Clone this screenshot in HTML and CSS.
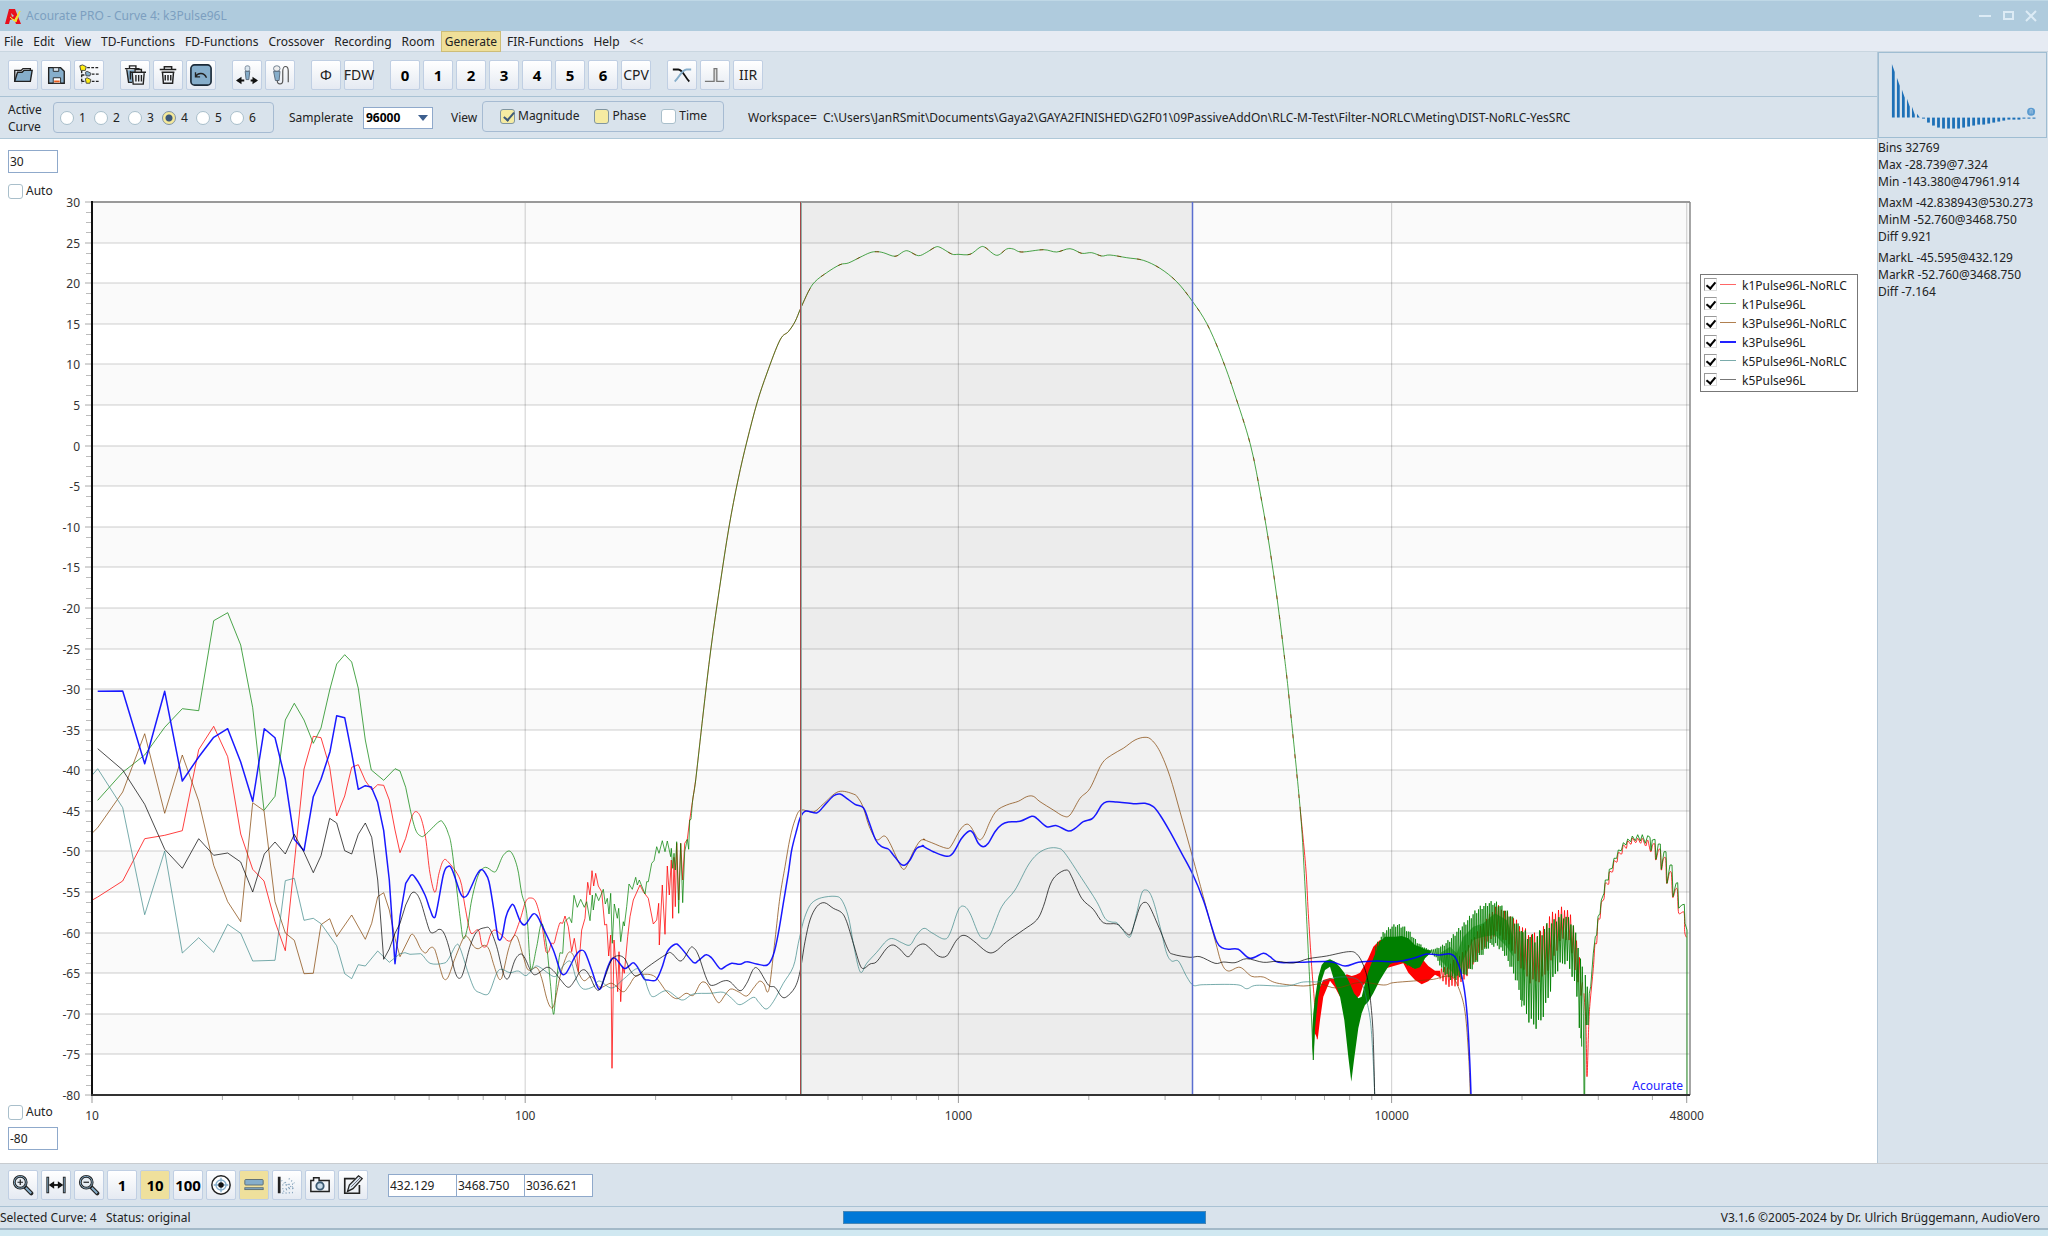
FILE: index.html
```html
<!DOCTYPE html>
<html lang="en">
<head>
<meta charset="utf-8">
<title>Acourate PRO - Curve 4: k3Pulse96L</title>
<link rel="stylesheet" href="styles.css">
</head>
<body>
<header class="titlebar">
  <svg class="app-icon" viewBox="0 0 17 17"><path d="M4 1h6l6 15h-5l-2-5-4 1-1 4H0z" fill="#e8101c"/><path d="M5 9l4 4 6-10-4 11z" fill="#f4e430" stroke="#f4e430"/><path d="M6 5l1 4 2-1z" fill="#afcbdd"/></svg>
  <h1 class="title">Acourate PRO - Curve 4: k3Pulse96L</h1>
  <div class="window-buttons">
    <button aria-label="Minimize"><svg viewBox="0 0 12 12"><path d="M0 6h12"/></svg></button>
    <button aria-label="Maximize"><svg viewBox="0 0 12 12"><rect x="2" y="2" width="9" height="7"/></svg></button>
    <button aria-label="Close"><svg viewBox="0 0 12 12"><path d="M1 1l10 10M11 1L1 11"/></svg></button>
  </div>
</header>
<nav class="menu">
  <a href="#file">File</a><a href="#edit">Edit</a><a href="#view">View</a><a href="#td">TD-Functions</a><a href="#fd">FD-Functions</a><a href="#crossover">Crossover</a><a href="#recording">Recording</a><a href="#room">Room</a><a class="active" href="#generate">Generate</a><a href="#fir">FIR-Functions</a><a href="#help">Help</a><a href="#less">&lt;&lt;</a>
</nav>

<div class="workarea">
  <div class="content">
    <div class="toolbar">
      <div class="group">
        <button class="tool" aria-label="Open"><svg viewBox="0 0 24 24"><path d="M3 19V7h7l2-2h8v3" fill="#e9eef5" stroke="#222" stroke-width="1.5"/><path d="M3 19L6 9h5l2-2h9l-2 12z" fill="#86aecb" stroke="#222" stroke-width="1.5"/></svg></button>
        <button class="tool" aria-label="Save"><svg viewBox="0 0 24 24"><path d="M4 4h13l4 4v13H4z" fill="#86aecb" stroke="#222" stroke-width="1.5"/><path d="M9 4h6v4H9z" fill="#dbe6ef" stroke="#222"/><path d="M9 15h8v6H9z" fill="#fff" stroke="#222"/><path d="M10 18h6v2h-6z" fill="#e85a1c"/></svg></button>
        <button class="tool" aria-label="Workspace tree"><svg viewBox="0 0 24 24"><path d="M4 7v14M4 12h5M4 19h5M10 4h12M15 11h8M15 19h8" stroke="#222" stroke-width="1.5" stroke-dasharray="3 1.5" fill="none"/><path d="M2 2l3-1 4 2-1 4H3z" fill="#ffee10" stroke="#444"/><path d="M8 9l2-1 4 2-1 3H9z" fill="#86aecb" stroke="#444"/><path d="M8 16l2-1 4 2-1 4H9z" fill="#ffee10" stroke="#444"/></svg></button>
      </div>
      <div class="group">
        <button class="tool" aria-label="Delete all"><svg viewBox="0 0 24 24"><path d="M3 7l2 13h6V6z" fill="#86aecb"/><path d="M1 5h16M6 5V2h7v3M3 6l2 14h4M7 8v9" fill="none" stroke="#222" stroke-width="1.5"/><path d="M9 10h13l-1 12H10z" fill="#eef2f7"/><path d="M7 9h17M12 9V6h7v3M9 10l1 12h11l1-12M13 12v7M16 12v7M19 12v7" fill="none" stroke="#222" stroke-width="1.5"/></svg></button>
        <button class="tool" aria-label="Delete"><svg viewBox="0 0 24 24"><path d="M3 6h18M8 6V3h8v3M5 9h14M6 9l1 12h10l1-12M9 12v6M12 12v6M15 12v6" fill="none" stroke="#222" stroke-width="1.6"/></svg></button>
        <button class="tool" aria-label="Undo"><svg viewBox="0 0 24 24"><rect x="1" y="1" width="22" height="22" rx="4" fill="#86aecb" stroke="#1b2a38" stroke-width="1.8"/><path d="M6 9v5h5M6 14c2-4 9-6 12 1" fill="none" stroke="#222" stroke-width="1.5"/></svg></button>
      </div>
      <div class="group">
        <button class="tool" aria-label="Move microphone"><svg viewBox="0 0 24 24"><rect x="10" y="2" width="5" height="6" rx="2" fill="#dbe6ef" stroke="#789"/><path d="M10 8h5l-1 9h-3z" fill="#86aecb" stroke="#567"/><path d="M2 18h7M16 18h6" stroke="#111" stroke-width="2"/><path d="M0 18l6-4v8zM24 18l-6-4v8z" fill="#111"/></svg></button>
        <button class="tool" aria-label="Microphone"><svg viewBox="0 0 24 24"><rect x="5" y="2" width="7" height="6" rx="3" fill="#eee" stroke="#678"/><path d="M5 8h7l-1 10H7z" fill="#86aecb" stroke="#567"/><path d="M9 18c0 5 6 5 6 0V8c0-7 6-7 6 0v12" fill="none" stroke="#555" stroke-width="1.3"/></svg></button>
      </div>
      <div class="group">
        <button class="tool">Φ</button>
        <button class="tool">FDW</button>
      </div>
      <div class="group">
        <button class="tool num">0</button><button class="tool num">1</button><button class="tool num">2</button><button class="tool num">3</button><button class="tool num">4</button><button class="tool num">5</button><button class="tool num">6</button>
        <button class="tool">CPV</button>
      </div>
      <div class="group">
        <button class="tool" aria-label="Crossover"><svg viewBox="0 0 24 24"><path d="M2 6h6c5 0 8 10 12 13" fill="none" stroke="#111" stroke-width="2"/><path d="M22 6h-5C12 6 8 16 4 19" fill="none" stroke="#86aecb" stroke-width="2"/></svg></button>
        <button class="tool" aria-label="Pulse"><svg viewBox="0 0 24 24"><path d="M1 19h10V5h3v14h8" fill="#ddd" stroke="#777" stroke-width="1.4"/></svg></button>
        <button class="tool">IIR</button>
      </div>
    </div>

    <div class="options">
      <span class="caption">Active Curve</span>
      <div class="box radios">
        <label><input type="radio" name="curve">1</label><label><input type="radio" name="curve">2</label><label><input type="radio" name="curve">3</label><label><input type="radio" name="curve" checked>4</label><label><input type="radio" name="curve">5</label><label><input type="radio" name="curve">6</label>
      </div>
      <label class="rate">Samplerate <select><option>96000</option></select></label>
      <span class="view-caption">View</span>
      <div class="box views">
        <label><input class="tick warm" type="checkbox" checked>Magnitude</label>
        <label><input class="tick warm" type="checkbox">Phase</label>
        <label><input class="tick" type="checkbox">Time</label>
      </div>
      <span class="path">Workspace=&nbsp; C:\Users\JanRSmit\Documents\Gaya2\GAYA2FINISHED\G2F01\09PassiveAddOn\RLC-M-Test\Filter-NORLC\Meting\DIST-NoRLC-YesSRC</span>
    </div>

    <main class="chart-area">
      <div class="limits">
        <div class="limit">
          <input class="field" aria-label="Upper limit" value="30">
          <label><input class="tick" type="checkbox">Auto</label>
        </div>
        <div class="limit lower">
          <label><input class="tick" type="checkbox">Auto</label>
          <input class="field" aria-label="Lower limit" value="-80">
        </div>
      </div>
      <svg class="chart" id="chart" viewBox="60 139 1640 1023" role="img" aria-label="Magnitude in dB over frequency"></svg>
      <div class="legend-column">
        <div class="legend">
          <label><input type="checkbox" checked><i class="key red"></i>k1Pulse96L-NoRLC</label>
          <label><input type="checkbox" checked><i class="key green"></i>k1Pulse96L</label>
          <label><input type="checkbox" checked><i class="key brown"></i>k3Pulse96L-NoRLC</label>
          <label><input type="checkbox" checked><i class="key blue"></i>k3Pulse96L</label>
          <label><input type="checkbox" checked><i class="key teal"></i>k5Pulse96L-NoRLC</label>
          <label><input type="checkbox" checked><i class="key black"></i>k5Pulse96L</label>
        </div>
      </div>
    </main>
  </div>

  <aside class="side">
    <div class="logo"><svg id="logo" viewBox="0 0 168 84" aria-hidden="true"></svg></div>
    <div class="stats"><p>Bins 32769</p><p>Max -28.739@7.324</p><p>Min -143.380@47961.914</p></div>
    <div class="stats"><p>MaxM -42.838943@530.273</p><p>MinM -52.760@3468.750</p><p>Diff 9.921</p></div>
    <div class="stats"><p>MarkL -45.595@432.129</p><p>MarkR -52.760@3468.750</p><p>Diff -7.164</p></div>
  </aside>
</div>

<div class="toolbar bottom">
  <div class="group">
    <button class="tool" aria-label="Zoom in"><svg viewBox="0 0 24 24"><path d="M14 14l7 7" stroke="#222" stroke-width="4.5" stroke-linecap="round"/><path d="M15 15l6 6" stroke="#86aecb" stroke-width="2"/><circle cx="9" cy="9" r="6.5" fill="#e6edf4" stroke="#222" stroke-width="3"/><circle cx="9" cy="9" r="6.5" fill="none" stroke="#86aecb"/><path d="M6 9h6M9 6v6" stroke="#222" stroke-width="1.3"/></svg></button>
    <button class="tool" aria-label="Fit width"><svg viewBox="0 0 24 24"><path d="M3 3v18M21 3v18" stroke="#222" stroke-width="3"/><path d="M3 4v16M21 4v16" stroke="#86aecb"/><path d="M7 12h10" stroke="#111" stroke-width="2"/><path d="M4 12l6-4v8zM20 12l-6-4v8z" fill="#111"/></svg></button>
    <button class="tool" aria-label="Zoom out"><svg viewBox="0 0 24 24"><path d="M14 14l7 7" stroke="#222" stroke-width="4.5" stroke-linecap="round"/><path d="M15 15l6 6" stroke="#86aecb" stroke-width="2"/><circle cx="9" cy="9" r="6.5" fill="#e6edf4" stroke="#222" stroke-width="3"/><circle cx="9" cy="9" r="6.5" fill="none" stroke="#86aecb"/><path d="M6 9h6" stroke="#222" stroke-width="1.3"/></svg></button>
    <button class="tool num">1</button>
    <button class="tool num on">10</button>
    <button class="tool num">100</button>
    <button class="tool" aria-label="Target"><svg viewBox="0 0 24 24"><circle cx="12" cy="12" r="10" fill="#fff" stroke="#222" stroke-width="1.6"/><circle cx="12" cy="12" r="5.5" fill="none" stroke="#86aecb" stroke-width="1.5"/><path d="M12 4v16M4 12h16" stroke="#86aecb" stroke-width="1.5"/><circle cx="12" cy="12" r="3" fill="#111"/></svg></button>
    <button class="tool on" aria-label="Bars"><svg viewBox="0 0 24 24"><rect x="2" y="6" width="20" height="6" rx="1" fill="#86aecb" stroke="#5a6b72"/><rect x="2" y="15" width="20" height="2" fill="#86aecb" stroke="#5a6b72"/></svg></button>
    <button class="tool" aria-label="Scatter"><svg viewBox="0 0 24 24"><path d="M3.500 3v18" stroke="#222" stroke-width="3"/><path d="M6 7l10 10M8 19l12-6M7 12l12-1M7 21l14-1M10 9l9 7M7 16h11M14 5l6 5" stroke="#7f9fb8" stroke-width="1.5" stroke-dasharray="1 2.500"/></svg></button>
    <button class="tool" aria-label="Snapshot"><svg viewBox="0 0 24 24"><path d="M2 7h3V4h6v3h11v12H2z" fill="#f2f5f9" stroke="#222" stroke-width="1.6"/><circle cx="12" cy="13" r="4" fill="#c8dbe9" stroke="#3c5a72" stroke-width="2"/></svg></button>
    <button class="tool" aria-label="Edit"><svg viewBox="0 0 24 24"><path d="M14 5H3v16h16v-9" fill="none" stroke="#222" stroke-width="1.8"/><path d="M6 19l2-7 10-10 4 3-10 11z" fill="#dde7f0" stroke="#222" stroke-width="1.4"/><path d="M10 14L20 4" stroke="#667"/></svg></button>
  </div>
  <div class="fields"><input class="field" aria-label="Left marker" value="432.129"><input class="field" aria-label="Right marker" value="3468.750"><input class="field" aria-label="Marker distance" value="3036.621"></div>
</div>
<footer class="status">
  <span>Selected Curve: 4 &nbsp; Status: original</span>
  <div class="progress" role="progressbar" aria-label="Progress" aria-valuenow="100"></div>
  <span class="version">V3.1.6 ©2005-2024 by Dr. Ulrich Brüggemann, AudioVero</span>
</footer>
<script src="chart.js"></script>
</body>
</html>
```
FILE: styles.css
```css
* { box-sizing: border-box; }
body {
  margin: 0;
  min-height: 100vh;
  display: flex;
  flex-direction: column;
  background: #d0e8f1;
  color: #222;
  font: 12px/16px "Noto Sans", "Open Sans", sans-serif;
}
button, input, select { font: inherit; color: inherit; margin: 0; }
label { display: flex; align-items: center; white-space: nowrap; }
p { margin: 0; }

.titlebar {
  display: flex;
  align-items: center;
  height: 31px;
  padding: 0 11px 0 5px;
  background: #afcbdd;
  border-top: 1px solid #bfd8e6;
}
.app-icon { width: 17px; height: 17px; margin-right: 4px; }
.title { flex: 1; margin: 0; font-size: 12px; font-weight: 400; color: #7c9fc0; }
.window-buttons { display: flex; gap: 11px; }
.window-buttons button { width: 12px; height: 12px; padding: 0; border: 0; background: none; }
.window-buttons svg { display: block; fill: none; stroke: #dcebf5; stroke-width: 2; }

.menu {
  display: flex;
  gap: 2px;
  height: 21px;
  background: #e6ebf3;
  border-bottom: 1px solid #c9d6e0;
}
.menu a { height: 21px; padding: 2px 3px; border: 1px solid transparent; color: #222; text-decoration: none; }
.menu .active { background: #efdf98; border-color: #cdbd78; }

.workarea { display: flex; flex: 1; background: #d9e3ec; }
.content { flex: 1; min-width: 0; display: flex; flex-direction: column; }
.side { width: 171px; border-left: 1px solid #b4c8d8; white-space: nowrap; }
.logo { height: 86px; margin: 0 1px 1px 0; border: 1px solid #9fbdd2; }
.logo svg { display: block; width: 100%; }
.stats { line-height: 17px; margin-bottom: 4px; }

.toolbar {
  display: flex;
  align-items: center;
  gap: 16px;
  height: 45px;
  padding: 1px 8px 0;
  background: #d9e3ec;
  border-bottom: 1px solid #a9c2d4;
}
.bottom { height: 44px; gap: 20px; padding-top: 0; border-top: 1px solid #c8ccd0; }
.group { display: flex; gap: 3px; }
.tool {
  display: flex;
  align-items: center;
  justify-content: center;
  width: 30px;
  height: 30px;
  padding: 0;
  border: 1px solid #c0cfe3;
  border-radius: 2px;
  background: linear-gradient(#fff, #e5eaf2);
  font-size: 14px;
  white-space: nowrap;
}
.tool svg { width: 22px; height: 22px; flex: none; }
.num { font-size: 15px; font-weight: 700; color: #000; }
.on { background: #efe09c; }

.options {
  display: flex;
  align-items: center;
  height: 42px;
  border-bottom: 1px solid #afc8d8;
  padding: 0 8px;
}
.caption { width: 45px; line-height: 17px; }
.box { display: flex; align-items: center; height: 31px; border: 1px solid #a6bbd2; border-radius: 4px; }
.radios { width: 221px; padding-left: 6px; margin-right: 15px; }
.radios label { width: 34px; }
.radios input {
  appearance: none;
  width: 14px;
  height: 14px;
  margin-right: 5px;
  border: 1px solid #a9bfcb;
  border-radius: 50%;
  background: #fff;
}
.radios input:checked { background: radial-gradient(#3d5878 0 3px, #f5e99a 4px); border-color: #8093a3; }
.rate { width: 162px; }
.rate select {
  appearance: none;
  width: 70px;
  height: 22px;
  margin-left: auto;
  margin-right: 18px;
  padding: 0 2px;
  border: 1px solid #8fa9cb;
  border-radius: 0;
  background: #fff url("data:image/svg+xml,%3Csvg xmlns='http://www.w3.org/2000/svg' width='10' height='6'%3E%3Cpath d='M0 0h10L5 6z' fill='%233d5f8e'/%3E%3C/svg%3E") no-repeat right 4px center;
  font-weight: 700;
  color: #000;
}
.view-caption { width: 31px; }
.views { width: 242px; padding-left: 17px; gap: 15px; margin: 0 24px 3px 0; }
.path { white-space: nowrap; }
.tick {
  appearance: none;
  width: 15px;
  height: 15px;
  margin: 0 3px 0 0;
  flex: none;
  border: 1px solid #a9bfcb;
  border-radius: 3px;
  background: #fff;
}
.warm { background: #f5eba2; border-color: #8095a0; }
.tick:checked::after, .legend input:checked::after {
  content: "";
  display: block;
  width: 4px;
  height: 9px;
  margin: 0 0 0 5px;
  border: solid #3d5878;
  border-width: 0 2px 2px 0;
  transform: rotate(40deg);
}

.chart-area { display: flex; flex: 1; align-items: flex-start; background: #fff; }
.limits { align-self: stretch; width: 60px; padding: 11px 0 13px 8px; display: flex; flex-direction: column; justify-content: space-between; }
.limit { display: flex; flex-direction: column; gap: 10px; }
.lower { gap: 7px; }
.field { width: 50px; height: 23px; padding: 0 1px; border: 1px solid #8fa9cb; background: #fff; }
.chart { flex: 1; min-width: 0; overflow: visible; font-size: 12px; }
.legend-column { width: 177px; padding-top: 135px; }
.legend { width: 158px; padding: 1px 3px; border: 1px solid #777; background: #fff; }
.legend label { height: 19px; line-height: 19px; }
.legend input { appearance: none; width: 13px; height: 13px; margin: 0 3px 3px 0; border: 1px solid #999; border-right-color: #ddd; border-bottom-color: #ddd; flex: none; }
.legend input:checked::after { width: 4px; height: 7px; margin: 1px 0 0 3px; border-color: #000; }
.key { width: 16px; height: 1px; margin: 0 6px 2px 0; flex: none; }
.red { background: #f66; }
.green { background: #6a6; }
.brown { background: #b08050; }
.blue { background: #22f; height: 2px; }
.teal { background: #7aabab; }
.black { background: #777; }

.fields { display: flex; }
.fields .field { width: 69px; margin-right: -1px; }

.status {
  display: grid;
  grid-template-columns: 1fr 363px 1fr;
  align-items: center;
  height: 23px;
  margin-bottom: 6px;
  background: #d9e3ec;
  border-bottom: 2px solid #a3b9c8;
}
.progress { height: 13px; background: #0078d7; border: 1px solid #4a87b5; }
.version { padding-right: 8px; text-align: right; }

.axis-label { fill: #333; }
.brand { fill: #22f; }
```
FILE: chart.js
```js
const NS = "http://www.w3.org/2000/svg";
const chart = document.getElementById("chart");

function add(parent, tag, attrs, text) {
  const el = document.createElementNS(NS, tag);
  for (const k in attrs) el.setAttribute(k, attrs[k]);
  if (text) el.textContent = text;
  parent.appendChild(el);
  return el;
}

/* Plot frame in chart units */
const LEFT = 92, RIGHT = 1690, TOP = 202, BOTTOM = 1095, DECADE = 433.2;
const yOf = db => TOP + (30 - db) * (BOTTOM - TOP) / 110;
const xOf = f => LEFT + Math.log10(f / 10) * DECADE;

for (let i = 0; i < 22; i += 2)
  add(chart, "rect", { x: LEFT, y: yOf(30 - i * 5), width: RIGHT - LEFT, height: yOf(25) - TOP, fill: "#fafafa" });
const markL = 801, markR = 1192;
add(chart, "rect", { x: markL, y: TOP, width: markR - markL, height: BOTTOM - TOP, fill: "#000", opacity: 0.055 });

for (let db = 30; db >= -80; db -= 5) {
  const y = Math.round(yOf(db));
  add(chart, "path", { d: `M${LEFT} ${y}H${RIGHT}`, stroke: "#000", "stroke-opacity": 0.13, "stroke-width": 1.3 });
  add(chart, "path", { d: `M85 ${y}h6`, stroke: "#aaa" });
  add(chart, "text", { x: 80, y: y + 5, "text-anchor": "end", class: "axis-label" }, String(db));
  if (db > -80) for (let k = 1; k < 4; k++)
    add(chart, "path", { d: `M86 ${Math.round(yOf(db - k * 1.25))}.5h5`, stroke: "#bbb" });
}
for (const f of [10, 100, 1000, 10000, 48000]) {
  const x = xOf(f);
  add(chart, "path", { d: `M${x} ${TOP}V${BOTTOM}`, stroke: "#000", "stroke-opacity": 0.16, "stroke-width": 1.2 });
  add(chart, "path", { d: `M${x} ${BOTTOM}v8`, stroke: "#999" });
  add(chart, "text", { x, y: 1120, "text-anchor": "middle", class: "axis-label" }, String(f));
}
for (const d of [10, 100, 1000, 10000])
  for (let k = 2; k < 10; k++)
    if (k * d < 48000) add(chart, "path", { d: `M${xOf(k * d)} ${BOTTOM}v5`, stroke: "#aaa" });

add(chart, "path", { d: `M${LEFT} ${TOP}H${RIGHT}`, stroke: "#999", "stroke-width": 2 });
add(chart, "path", { d: `M${RIGHT} ${TOP}V${BOTTOM}`, stroke: "#888", "stroke-width": 1.5 });

/* Point lists are stored in thirds of a unit from a tile origin */
const tile = (ox, oy, text) => text.trim().split(/\s+/).map(p => {
  const [x, y] = p.split(",").map(Number);
  return [ox + x / 3, oy + y / 3];
});
const A = t => tile(80, 580, t), B = t => tile(480, 780, t), C = t => tile(920, 700, t), D = t => tile(1280, 780, t), E = t => tile(780, 190, t);

/* Straight at low frequencies, spline where the bins are dense */
function line(points, smooth) {
  let d = "M" + points[0].map(v => v.toFixed(1)).join(" ");
  for (let i = 1; i < points.length; i++) {
    const p0 = points[Math.max(i - 2, 0)], p1 = points[i - 1], p2 = points[i], p3 = points[Math.min(i + 1, points.length - 1)];
    if (smooth(p1[0])) {
      const limit = (m, a, b) => Math.max(Math.min(a, b) - 2, Math.min(Math.max(a, b) + 2, m));
      const c = [p1[0] + (p2[0] - p0[0]) / 6, limit(p1[1] + (p2[1] - p0[1]) / 6, p1[1], p2[1]), p2[0] - (p3[0] - p1[0]) / 6, limit(p2[1] - (p3[1] - p1[1]) / 6, p1[1], p2[1])];
      d += `C${c.map(v => v.toFixed(1)).join(" ")} ${p2.map(v => v.toFixed(1)).join(" ")}`;
    } else d += `L${p2.map(v => v.toFixed(1)).join(" ")}`;
  }
  return d;
}
function curve(points, color, width, opacity, smooth = x => x > 410, dash = "none") {
  add(chart, "path", { d: line(points, smooth), fill: "none", stroke: color, "stroke-width": width, "stroke-opacity": opacity, "stroke-linejoin": "round", "stroke-dasharray": dash });
}
/* Ripple: rows of x,top,bottom */
function rows(text) {
  return text.trim().split(/\s+/).map(r => { const v = r.split(",").map(Number); return [1280 + v[0] / 3, 780 + v[1] / 3, 780 + v[2] / 3]; });
}
function solid(text, color) {
  const r = rows(text);
  const up = r.map(v => [v[0], v[1]]), down = r.map(v => [v[0], v[2]]).reverse();
  add(chart, "path", { d: "M" + up.concat(down).map(p => p.map(v => v.toFixed(1)).join(" ")).join("L") + "Z", fill: color });
}
function ripple(text, color, step, opacity) {
  const r = rows(text);
  let d = "", n = 0;
  for (let x = r[0][0]; x < r[r.length - 1][0]; x += step, n++) {
    let i = 1;
    while (r[i][0] < x) i++;
    const t = (x - r[i - 1][0]) / (r[i][0] - r[i - 1][0]);
    const at = k => r[i - 1][k] + t * (r[i][k] - r[i - 1][k]);
    const h = (at(2) - at(1)) * 0.08 * (n % 3);
    d += `${d ? "L" : "M"}${x.toFixed(1)} ${(n % 2 ? at(1) + h / 2 : at(2) - h / 2).toFixed(1)}`;
  }
  add(chart, "path", { d, fill: "none", stroke: color, "stroke-width": 1, "stroke-opacity": opacity });
}

const rise = [[695.7, 780], [703, 715], [711, 648], [720, 585], [729, 527], [738, 480], [747, 441], [757, 403], [767, 373]];
const plateau = E("0,450 25,425 45,395 62,355 85,305 105,275 140,248 180,224 205,219 240,202 270,188 290,185 310,188 345,199 370,185 385,183 415,197 440,187 465,172 480,172 515,192 535,193 570,193 600,172 615,172 650,196 680,177 700,177 725,186 790,179 830,186 870,176 905,190 935,188 965,198 990,195 1040,203 1090,211 1140,235 1190,275 1238,335 1280,400 1320,490 1360,600");
const fall = [[1250.5, 445], [1261.5, 500], [1270, 550], [1277.3, 600], [1283.6, 650], [1289.3, 700], [1300, 806.7]];
const noisy = x => (x > 410 && x < 558) || (x > 690 && x < 1308);

const k1nLow = [
  ...A("37,960 53,951 128,903 194,776 254,766 307,752 356,509 401,439 443,530 482,762 518,868 552,903 585,1025 616,1112 643,850 672,567 700,469 723,473 749,562 770,708 794,648 815,562 835,554 856,602 876,630 893,614 911,616 928,660 945,750 960,818 977,775 992,720 1006,695 1022,712 1037,775 1050,880 1065,937 1077,880 1090,842 1104,845 1140,898 1155,980 1173,1060 1195,1050 1206,1096 1220,1097 1232,1062 1245,1050 1265,1065 1285,1083 1300,1072 1320,1020 1337,965 1352,954 1368,967 1385,1030 1398,1115 1406,1115 1414,1090 1422,1090 1430,1060"),
  ...B("240,428 248,430 255,408 265,440 275,515 283,475 290,520 295,575 305,450 315,415 323,307 330,345 336,272 341,318 347,280 355,318 365,335 374,435 380,433 386,528 392,465 396,865 402,480 408,560 413,635 417,515 422,665 428,560 433,580 443,470 450,410 460,360 480,315 490,335 505,355 520,432 530,420 536,370 538,495 547,315 555,463 562,258 568,345 574,240 578,415 582,232 586,380 590,190 596,360 602,190 608,300 614,190 622,178 629,120 647,0")];
const k1nHigh = [...C("1140,320 1157,500 1165,640 1175,800 1183,900"), ...D("104,700 112,778")];
const k1 = [
  ...A("53,661 128,577 194,525 254,442 307,386 356,392 401,122 443,98 482,195 518,383 552,691 585,649 616,420 643,370 672,420 700,490 723,444 749,330 770,252 794,224 815,246 835,325 856,480 874,570 911,601 945,566 960,573 977,622 992,695 1007,750 1022,768 1035,765 1077,725 1090,729 1104,758 1116,810 1140,1010 1150,1075 1162,1045 1175,960 1195,885 1216,862 1240,875 1250,870 1270,826 1292,815 1312,862 1325,940 1340,1000 1353,1168 1370,1100 1385,1030 1400,1100 1412,1220 1421,1303 1430,1200"),
  ...B("240,518 248,520 254,425 268,412 275,428 282,346 292,382 302,358 313,382 320,365 330,422 337,345 340,390 347,340 356,362 370,328 376,372 382,355 387,402 392,340 397,490 403,372 412,415 416,385 422,485 430,425 433,438 440,380 447,312 457,328 467,292 472,315 478,300 495,342 500,305 505,305 515,250 522,242 530,200 537,220 547,182 555,215 562,183 572,230 574,205 578,265 582,220 586,270 590,185 596,400 602,190 608,368 614,215 622,178 626,208 629,120 633,118 638,60"),
  ...rise, ...plateau, ...fall, ...C("1153,520 1163,720 1170,860"), ...D("94,700 100,840 105,700")];

curve(k1nLow, "#f00", 1, 0.75, noisy);
curve([...rise, ...plateau.slice(0, 5)], "#f00", 1, 0.6);
curve([...plateau.slice(4), ...fall], "#f00", 1, 0.8, x => x > 0, "4 16");
curve(k1nHigh, "#f00", 1, 0.8);
solid("104,720,760 110,670,770 113,640,778 120,620,720 130,600,650 150,594,602 165,598,622 180,600,650 200,583,630 215,588,645 228,584,658 240,578,645 250,562,615 265,535,600 280,500,585 300,480,570 370,490,550 385,500,578 405,520,600 425,535,613 445,558,604 465,572,584 480,572,592", "#f00");
ripple("480,565,598 500,560,618 520,540,625 545,520,612 560,500,590 600,440,520 650,372,460 690,400,500 720,430,560 750,458,610 770,458,610 790,440,600 810,400,560 845,380,480 865,388,480 880,425,540 890,480,600 903,560,650 912,640,720", "#f00", 1.5, 0.8);
curve(D("912,640 918,740 921,890 926,740 930,670 940,565 945,492 950,488 954,420 960,415 964,368 972,356 976,310 986,312 988,276 998,275 1002,243 1011,246 1015,218 1025,222 1030,195 1039,205 1043,183 1053,193 1057,174 1067,188 1073,175 1082,190 1087,175 1097,198 1103,180 1112,215 1118,195 1124,193 1127,240 1135,212 1141,210 1144,270 1150,238 1157,235 1160,310 1168,280 1174,278 1178,352 1186,330 1192,328 1196,400 1212,397 1214,455 1219,472"), "#f00", 1, 0.8);

curve(k1, "#008000", 1, 0.7, noisy);
solid("97,750,800 100,700,840 105,655,745 115,590,650 125,555,600 135,543,570 150,538,560 165,545,610 180,562,650 193,578,720 205,600,830 214,620,905 222,640,840 235,655,745 245,650,700 255,610,675 265,575,665 280,535,640 300,485,600 315,470,575 330,470,552 345,470,547 365,468,545 385,475,556 405,495,567 420,500,562 435,508,535 452,512,518", "#008000");
ripple("285,500,610 310,455,570 330,438,550 350,430,546 370,436,548 390,455,562 410,482,565 430,500,540 450,510,518 470,504,535 490,493,580 510,475,600 530,450,600 550,430,595 575,400,570 600,378,535 630,363,500 650,365,500 670,380,520 690,400,560 710,425,610 730,450,690", "#008000", 0.9, 0.75);
solid("480,520,540 510,500,570 530,520,590 550,470,540 580,440,480 610,430,470 645,400,465 680,420,500 700,470,530", "#00800080");
ripple("725,445,680 750,460,735 765,465,748 780,450,740 800,430,680 820,420,600 840,402,560 860,405,550 880,430,600 890,470,650 900,510,770 908,600,850", "#008000", 1.2, 0.9);
curve(D("902,775 907,560 910,700 912,945 914,945 916,585 919,735 922,620 924,735 928,640 932,620 940,520 946,470 950,465 954,410 960,400 964,360 972,340 976,300 985,300 988,268 997,265 1002,235 1010,235 1015,210 1024,212 1030,188 1038,195 1043,177 1052,185 1057,168 1066,182 1073,164 1081,183 1087,164 1096,190 1103,167 1110,172 1113,212 1117,180 1125,178 1128,238 1135,192 1141,192 1144,268 1152,215 1158,215 1161,310 1170,255 1176,255 1179,350 1188,310 1193,308 1196,385 1205,375 1213,373 1215,430 1221,450 1221,945"), "#008000", 1, 0.8, () => false);

curve([
  ...A("37,759 53,743 128,636 194,461 254,700 307,525 356,663 401,856 443,965 482,1025 518,668 552,692 585,965 616,1059 643,1081 672,1181 700,1180 723,1034 749,1016 770,1070 815,1005 856,1078 875,1030 893,950 911,938 928,990 945,1075 960,1130 992,1065 1006,1073 1022,1106 1037,1119 1050,1104 1064,1108 1090,1195 1104,1192 1125,1135 1150,1075 1162,1070 1180,1098 1195,1106 1213,1096 1227,1108 1240,1150 1255,1193 1265,1195 1285,1110 1300,1070 1312,1072 1330,1130 1345,1170 1370,1163 1385,1195 1400,1255 1412,1282 1422,1275"),
  ...B("240,590 255,540 268,516 282,530 295,575 312,602 335,590 360,622 395,610 428,635 445,620 465,590 490,583 525,590 560,635 590,656 618,640 640,646 660,612 672,606 685,617 705,655 718,668 735,645 752,627 775,635 800,648 820,625 838,604 852,612 862,636 870,610 885,480 900,350 915,260 930,175 945,120 962,90 1000,96 1030,72 1075,35 1120,42 1135,55 1150,83 1168,140 1190,179 1213,168 1230,190 1265,264 1278,262 1300,215 1320,183 1335,179"),
  ...C("10,418 35,428 80,445 95,435 120,390 138,373 152,380 175,417 190,410 210,365 230,332 260,315 295,304 320,290 340,289 360,305 400,330 430,348 450,345 480,295 510,265 545,192 575,165 610,145 645,120 675,112 695,120 720,155 750,230 780,335 817,468 850,590 885,720 905,790 925,813 960,802 995,829 1030,831 1070,849"),
  ...D("70,618 120,612 170,624 240,607 310,615 340,608 400,603 460,598 490,590 515,590 530,610 548,660 558,720 566,830 571,945")
], "#804000", 1, 0.7);

curve([
  ...A("53,334 128,333 194,551 254,334 307,603 356,531 401,472 443,446 482,546 518,664 553,446 585,473 616,598 643,778 672,812 700,650 723,598 750,515 770,407 794,413 815,520 835,628 856,617 874,621 893,667 911,752 928,900 945,1151 960,1010 977,910 992,886 1006,893 1035,945 1050,988 1065,1012 1090,885 1103,860 1116,868 1140,937 1150,951 1163,943 1190,885 1203,869 1214,877 1227,905 1240,980 1255,1077 1266,1070 1278,1010 1293,977 1302,977 1320,1022 1335,1034 1358,1003 1370,1006"),
  ...B("184,432 220,510 243,578 258,580 285,530 300,512 315,517 335,570 353,622 363,624 380,570 395,537 408,537 432,565 447,558 460,548 473,562 492,596 505,600 528,600 545,565 562,515 585,493 600,500 640,547 655,542 678,524 695,534 720,566 735,560 755,550 780,553 800,545 830,552 862,555 880,525 895,460 910,370 925,280 935,210 950,150 962,110 978,93 1010,99 1030,80 1060,48 1080,42 1100,55 1125,73 1150,83 1165,120 1187,180 1205,200 1225,207 1240,225 1262,252 1275,255 1290,240 1310,205 1330,198"),
  ...C("8,438 40,455 80,469 100,458 125,415 148,393 160,400 175,430 190,440 205,430 225,395 245,374 265,366 300,364 335,349 350,355 380,380 410,377 445,393 465,385 490,365 515,357 530,340 545,315 560,305 590,306 640,311 675,310 700,320 720,345 750,395 785,460 817,520 850,600 875,680 890,725 905,743 925,748 955,748 990,775 1030,760 1050,770 1075,787 1130,787 1230,785"),
  ...D("195,558 235,547 290,543 350,545 400,535 440,522 480,525 510,522 530,540 550,610 562,710 570,860 573,945")
], "#00f", 1.5, 0.9);

curve([
  ...A("37,585 53,566 128,683 194,1004 254,813 307,1119 356,1073 401,1117 443,1033 482,1060 518,1143 585,1141 616,902 643,895 672,1021 700,1015 723,1031 770,1097 794,1181 815,1196 835,1154 856,1158 893,1113 928,1147 960,1121 975,1118 990,1123 1022,1121 1050,1150 1090,1150 1105,1138 1128,1096 1140,1104 1165,1180 1183,1226 1200,1238 1225,1242 1250,1180 1265,1168 1290,1178 1315,1173 1338,1187 1360,1165 1375,1159 1415,1187 1430,1187"),
  ...B("240,570 262,545 275,550 290,600 310,627 340,620 358,603 395,624 430,598 470,566 490,585 505,630 520,650 560,632 605,660 640,642 690,640 730,637 755,655 780,674 820,652 835,665 858,687 880,665 910,610 940,560 955,490 970,425 985,385 1000,365 1025,353 1065,349 1085,360 1105,410 1120,490 1135,560 1145,577 1160,550 1190,517 1220,482 1240,476 1265,488 1290,495 1310,465"),
  ...C("12,685 35,698 72,717 90,700 115,630 132,619 150,640 175,700 190,715 210,705 245,620 285,570 325,495 355,460 385,445 415,445 435,460 485,535 530,605 555,655 575,666 590,668 605,685 625,711 635,700 650,640 665,580 677,570 690,580 705,620 725,700 740,760 755,783 775,783 800,830 820,856 850,854 950,854 980,866 1010,856 1100,858 1150,846 1200,845 1250,832 1290,832"),
  ...D("235,600 250,620 262,670 272,730 279,830 284,945")
], "#2f7f7f", 1, 0.65);

curve([
  ...A("53,506 128,570 194,673 254,808 307,865 356,776 401,826 443,819 482,846 518,936 553,822 585,786 616,822 643,763 672,817 700,878 723,827 749,715 770,729 794,812 815,822 835,763 856,729 875,772 893,900 911,1138 928,1107 945,1060 960,1030 977,975 992,943 1006,938 1022,965 1050,1055 1065,1056 1077,1048 1090,1056 1105,1095 1125,1175 1138,1195 1150,1177 1170,1100 1190,1055 1215,1043 1230,1048 1250,1100 1270,1180 1285,1195 1305,1140 1322,1122 1335,1135 1355,1177 1370,1183 1400,1162 1420,1172"),
  ...B("240,597 265,622 285,600 300,575 315,570 330,590 345,622 358,629 375,590 395,540 415,527 435,537 450,570 470,588 500,563 560,522 575,520 603,543 630,505 640,503 655,525 690,615 730,603 750,605 780,632 800,610 820,568 835,567 865,615 885,622 905,650 920,650 945,622 960,575 975,485 990,420 1010,380 1033,368 1060,385 1085,398 1100,425 1120,490 1140,555 1152,565 1170,552 1190,545 1220,505 1240,495 1260,508 1285,530 1310,500"),
  ...C("12,732 30,745 55,768 80,768 110,720 132,706 160,722 200,755 225,755 260,725 310,690 350,660 370,620 390,555 410,525 440,510 455,530 485,595 520,628 550,668 590,672 610,690 630,704 645,665 660,620 675,607 690,622 720,690 745,750 760,763 810,772 840,770 885,790 910,786 945,788 980,776 1030,787 1070,784 1120,789 1165,776 1220,768 1285,755 1310,762 1330,795 1345,850"),
  ...D("277,720 281,820 284,945")
], "#000", 1, 0.7);

/* Markers and axes on top of the curves */
add(chart, "path", { d: `M800.5 ${TOP}V${BOTTOM}`, stroke: "#a04848" });
add(chart, "path", { d: `M801.5 ${TOP}V${BOTTOM}`, stroke: "#90b0a8" });
add(chart, "path", { d: `M1192.5 ${TOP}V${BOTTOM}`, stroke: "#5a6ed0", "stroke-width": 1.5 });
add(chart, "path", { d: `M92 ${TOP - 1}V${BOTTOM}`, stroke: "#111", "stroke-width": 2 });
add(chart, "path", { d: `M91 ${BOTTOM}H${RIGHT}`, stroke: "#333", "stroke-width": 2 });
add(chart, "text", { x: 1683, y: 1090, "text-anchor": "end", class: "brand" }, "Acourate");

/* Impulse logo */
const logo = document.getElementById("logo");
const heights = [54, 40, 28, 19, 11, 4, -1, -5, -8, -10, -11, -11, -11, -11, -10, -9, -8, -7, -7, -6, -5, -4, -3, -2, -2, -2, -1, -1, -1];
heights.forEach((h, i) => {
  const x = 13 + i * 5.05, w = Math.abs(h) < 3 ? 3 : 2.8;
  if (h > 0) add(logo, "path", { d: `M${x} 65v${-h}l${w} ${Math.min(h, 8)}V65z`, fill: "#1d70b7" });
  else add(logo, "rect", { x, y: 65, width: w, height: -h, fill: "#1d70b7" });
});
add(logo, "circle", { cx: 153, cy: 59, r: 4, fill: "#5b9bd0" });
add(logo, "path", { d: "M152 61v-4h2v4", fill: "none", stroke: "#a9c8e2" });
```
